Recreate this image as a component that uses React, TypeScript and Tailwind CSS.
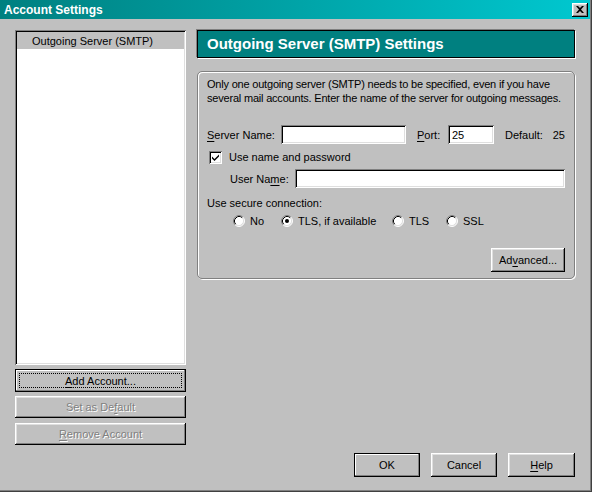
import React from 'react'

const raised =
  'shadow-[inset_-1px_-1px_0_#000,inset_1px_1px_0_#fff,inset_-2px_-2px_0_#808080,inset_2px_2px_0_#dfdfdf]'
const raisedInner =
  'shadow-[inset_-1px_-1px_0_#808080,inset_1px_1px_0_#fff]'
const sunken =
  'shadow-[inset_1px_1px_0_#808080,inset_-1px_-1px_0_#fff,inset_2px_2px_0_#000,inset_-2px_-2px_0_#dfdfdf]'

function U({ children }: { children: React.ReactNode }) {
  return <span className="underline underline-offset-[2px]">{children}</span>
}

function Button({
  children,
  className = '',
  variant = 'normal',
}: {
  children: React.ReactNode
  className?: string
  variant?: 'normal' | 'default' | 'focus' | 'disabled'
}) {
  if (variant === 'default' || variant === 'focus') {
    return (
      <div className={`border border-black bg-[#c0c0c0] flex ${className}`}>
        <div className={`flex-1 flex items-center justify-center p-[3px] ${raisedInner}`}>
          <div
            className={`flex-1 self-stretch flex items-center justify-center ${
              variant === 'focus' ? 'border border-dotted border-black' : 'border border-transparent'
            }`}
          >
            {children}
          </div>
        </div>
      </div>
    )
  }
  return (
    <div
      className={`bg-[#c0c0c0] flex items-center justify-center ${raised} ${
        variant === 'disabled' ? 'text-[#808080] [text-shadow:1px_1px_0_#fff]' : ''
      } ${className}`}
    >
      {children}
    </div>
  )
}

function TextBox({ className = '', value = '' }: { className?: string; value?: string }) {
  return (
    <div className={`bg-white h-[19px] px-[4px] flex items-center ${sunken} ${className}`}>
      {value}
    </div>
  )
}

function Radio({ checked = false, label }: { checked?: boolean; label: string }) {
  return (
    <div className="flex items-center gap-[5px]">
      <svg width="12" height="12" viewBox="0 0 12 12">
        <circle cx="6" cy="6" r="5" fill="#fff" />
        <path d="M2.11 9.89 A5.5 5.5 0 0 1 9.89 2.11" fill="none" stroke="#808080" strokeWidth="1" />
        <path d="M9.89 2.11 A5.5 5.5 0 0 1 2.11 9.89" fill="none" stroke="#fff" strokeWidth="1" />
        <path d="M2.82 9.18 A4.5 4.5 0 0 1 9.18 2.82" fill="none" stroke="#000" strokeWidth="1" />
        <path d="M9.18 2.82 A4.5 4.5 0 0 1 2.82 9.18" fill="none" stroke="#dfdfdf" strokeWidth="1" />
        {checked && <circle cx="6" cy="6" r="2" fill="#000" />}
      </svg>
      <span>{label}</span>
    </div>
  )
}

function Checkbox({ checked = false }: { checked?: boolean }) {
  return (
    <div className={`w-[13px] h-[13px] bg-white ${sunken} flex items-center justify-center`}>
      {checked && (
        <svg width="9" height="9" viewBox="0 0 9 9">
          <path d="M1 3.5 L3.5 6 L8 1.5 L8 3.5 L3.5 8 L1 5.5 Z" fill="#000" />
        </svg>
      )}
    </div>
  )
}

export default function App() {
  return (
    <div
      className="w-[592px] h-[492px] bg-[#c0c0c0] flex flex-col text-[11px] leading-[14px] text-black pr-[2px] pb-[2px] shadow-[inset_-1px_-1px_0_#404040,inset_-2px_-2px_0_#808080]"
      style={{ fontFamily: '"Liberation Sans", Arial, sans-serif' }}
    >
      {/* title bar */}
      <div className="h-[19px] bg-gradient-to-r from-[#008080] to-[#00c8d0] flex items-center pl-[4px] pr-[2px]">
        <span className="text-white font-bold text-[12px] flex-1">Account Settings</span>
        <div className={`w-[16px] h-[14px] bg-[#c0c0c0] flex items-center justify-center ${raised}`}>
          <svg width="8" height="7" viewBox="0 0 8 7">
            <path d="M0 0h2l2 2 2-2h2L5 3.5 8 7H6L4 5 2 7H0l3-3.5z" fill="#000" />
          </svg>
        </div>
      </div>

      <div className="flex-1 flex pl-[15px] pt-[11px] gap-[11px]">
        {/* left column */}
        <div className="w-[171px] flex flex-col">
          <div className={`h-[335px] bg-white p-[2px] ${sunken}`}>
            <div className="h-[17px] bg-[#c0c0c0] flex items-center pl-[15px]">Outgoing Server (SMTP)</div>
          </div>
          <Button variant="focus" className="h-[23px] mt-[4px]">
            <span>
              <U>A</U>dd Account...
            </span>
          </Button>
          <Button variant="disabled" className="h-[22px] mt-[4px]">
            <span>
              Set as De<U>f</U>ault
            </span>
          </Button>
          <Button variant="disabled" className="h-[22px] mt-[5px]">
            <span>
              <U>R</U>emove Account
            </span>
          </Button>
        </div>

        {/* right column */}
        <div className="w-[378px] flex flex-col">
          <div className="h-[28px] bg-[#008080] border border-black shadow-[-1px_-1px_0_#808080,1px_1px_0_#fff] flex items-center pl-[9px]">
            <span className="text-white font-bold text-[15px]">Outgoing Server (SMTP) Settings</span>
          </div>

          <div className="mt-[13px] h-[208px] border border-[#808080] rounded-[5px] shadow-[1px_1px_0_#fff,inset_1px_1px_0_#fff] px-[9px] pt-[5px] flex flex-col">
            <p className="leading-[14px] whitespace-nowrap tracking-[-0.2px]">
              Only one outgoing server (SMTP) needs to be specified, even if you have
              <br />
              several mail accounts. Enter the name of the server for outgoing messages.
            </p>

            <div className="flex items-center mt-[20px]">
              <span className="w-[74px]">
                <U>S</U>erver Name:
              </span>
              <TextBox className="w-[125px]" />
              <span className="ml-[11px] w-[31px]">
                <U>P</U>ort:
              </span>
              <TextBox className="w-[46px]" value="25" />
              <span className="ml-[11px] flex-1">Default:</span>
              <span>25</span>
            </div>

            <div className="flex items-center mt-[6px] pl-[2px] gap-[7px]">
              <Checkbox checked />
              <span>Use name and password</span>
            </div>

            <div className="flex items-center mt-[5px] pl-[23px]">
              <span className="w-[65px]">
                User Na<U>m</U>e:
              </span>
              <TextBox className="flex-1" />
            </div>

            <div className="mt-[8px]">Use secure connection:</div>

            <div className="flex items-center mt-[4px] pl-[26px]">
              <div className="w-[48px]">
                <Radio label="No" />
              </div>
              <div className="w-[111px]">
                <Radio checked label="TLS, if available" />
              </div>
              <div className="w-[54px]">
                <Radio label="TLS" />
              </div>
              <Radio label="SSL" />
            </div>

            <div className="flex justify-end mt-[20px]">
              <Button className="w-[74px] h-[24px]">
                <span>
                  Ad<U>v</U>anced...
                </span>
              </Button>
            </div>
          </div>

          <div className="flex-1" />

          <div className="flex justify-end gap-[11px] mb-[13px]">
            <Button variant="default" className="w-[66px] h-[24px]">
              OK
            </Button>
            <Button className="w-[66px] h-[24px]">Cancel</Button>
            <Button className="w-[67px] h-[24px]">
              <span>
                <U>H</U>elp
              </span>
            </Button>
          </div>
        </div>
      </div>
    </div>
  )
}
